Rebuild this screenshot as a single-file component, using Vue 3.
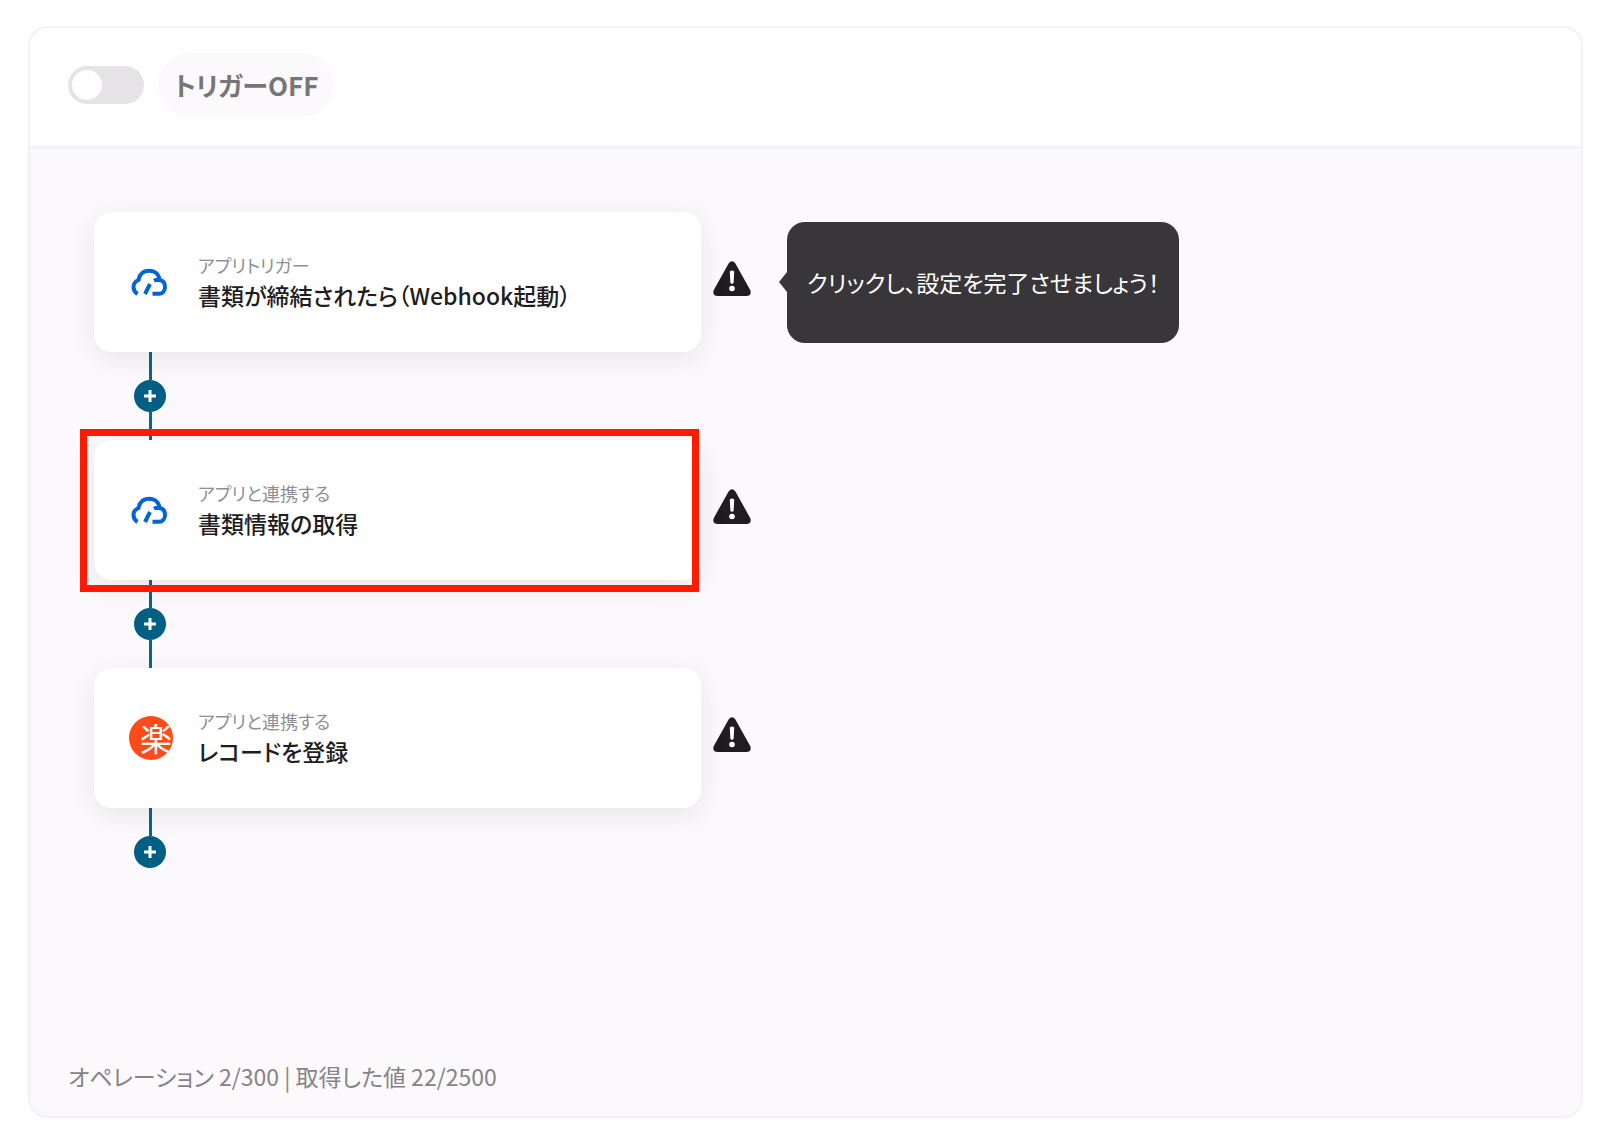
<template>
  <main class="page">
    <section class="panel">
      <header class="panel-header">
        <input id="trigger" v-model="triggerOn" class="switch" type="checkbox" role="switch" />
        <label class="chip" for="trigger">トリガー{{ triggerOn ? 'ON' : 'OFF' }}</label>
      </header>

      <div class="flow">
        <template v-for="(step, index) in steps" :key="index">
          <div class="step">
            <div class="card-wrap">
              <button class="card" type="button" @click="selected = index">
                <svg v-if="step.app === 'cloud'" class="logo" viewBox="0 0 44 44">
                  <path
                    d="M8.500 34C5.500 32 4.500 29.500 4.500 27C4.500 23.500 6.500 21.300 9.500 20C10.500 14 14.500 10.800 20 10.800C26 10.800 30 14.500 30.500 20C34 20.500 36 23 36 27C36 31 33.500 33.800 30 33.800H23.500M31.500 20.500C29.500 19.500 27.500 19.500 25 20.800M21 24L16 34"
                    fill="none"
                    stroke="#0563d6"
                    stroke-width="4"
                  />
                </svg>
                <span v-else class="logo raku">楽</span>
                <span class="card-text">
                  <span class="card-label">{{ step.label }}</span>
                  <span class="card-title">{{ step.title }}</span>
                </span>
              </button>
              <div v-if="selected === index" class="highlight"></div>
            </div>
            <svg class="warning" viewBox="0 0 38 42" role="img" aria-label="未設定">
              <path
                d="M15.600 2.500Q19 -2 22.400 2.500L37.200 29Q39 34.500 34 35H4Q-1 34.500 0.800 29Z"
                fill="#1f1d21"
              />
              <path d="M16.800 10.500Q19 8.500 21.200 10.500L20.600 22Q19 23.500 17.400 22Z" fill="#fff" />
              <circle cx="19" cy="27.500" r="2.800" fill="#fff" />
            </svg>
            <p v-if="step.hint" class="bubble">{{ step.hint }}</p>
          </div>
          <div class="connector">
            <span class="line"></span>
            <button class="add" type="button" aria-label="追加">
              <svg viewBox="0 0 14 14">
                <path d="M7 1V13M1 7H13" stroke="#fff" stroke-width="3" />
              </svg>
            </button>
            <span v-if="index < steps.length - 1" class="line"></span>
          </div>
        </template>
      </div>

      <footer class="panel-footer">オペレーション 2/300 | 取得した値 22/2500</footer>
    </section>
  </main>
</template>

<script setup>
import { ref } from 'vue'

const triggerOn = ref(false)
const selected = ref(1)

const steps = [
  {
    app: 'cloud',
    label: 'アプリトリガー',
    title: '書類が締結されたら（Webhook起動）',
    hint: 'クリックし、設定を完了させましょう！'
  },
  { app: 'cloud', label: 'アプリと連携する', title: '書類情報の取得' },
  { app: 'raku', label: 'アプリと連携する', title: 'レコードを登録' }
]
</script>

<style>
body {
  background: #fefefe;
}
</style>

<style scoped>
.page {
  box-sizing: border-box;
  display: flex;
  min-height: 100vh;
  padding: 26px 17px 10px 28px;
  font-family: "Noto Sans CJK JP", sans-serif;
  font-feature-settings: "palt";
}

.panel {
  flex: 1;
  display: flex;
  flex-direction: column;
  border: 2px solid #f2f1f4;
  border-radius: 20px;
  background: #fbf9fc;
  overflow: hidden;
}

.panel-header {
  display: flex;
  align-items: center;
  gap: 14px;
  padding: 25px 38px 29px;
  border-bottom: 3px solid #f3f2f5;
  background: #fefefe;
}

.switch {
  appearance: none;
  width: 76px;
  height: 38px;
  margin: 0;
  padding: 4px;
  border-radius: 19px;
  background: #e5e3e6;
  cursor: pointer;
}

.switch::before {
  content: "";
  display: block;
  width: 30px;
  height: 30px;
  border-radius: 50%;
  background: #fefefe;
}

.switch:checked {
  background: #005f83;
}

.switch:checked::before {
  margin-left: auto;
}

.chip {
  padding: 0 16px;
  border-radius: 32px;
  background: #fbf9fc;
  color: #777578;
  font-size: 26px;
  font-weight: 700;
  line-height: 64px;
}

.flow {
  flex: 1;
  padding: 63px 64px;
}

.step {
  display: flex;
  align-items: center;
}

.card-wrap {
  position: relative;
  flex: 0 1 607px;
}

.card {
  display: flex;
  align-items: center;
  gap: 25px;
  width: 100%;
  height: 140px;
  padding: 0 35px;
  border: 0;
  border-radius: 18px;
  background: #fff;
  box-shadow: 0 6px 28px rgba(40, 35, 45, 0.09);
  font: inherit;
  font-feature-settings: inherit;
  text-align: left;
  cursor: pointer;
}

.highlight {
  position: absolute;
  inset: -11px 2px -12px -14px;
  z-index: 1;
  border: 7px solid #ff1a00;
  pointer-events: none;
}

.logo {
  box-sizing: border-box;
  flex: none;
  width: 44px;
  height: 44px;
}

.raku {
  padding-left: 11px;
  border-radius: 50%;
  background: #ff4b19;
  color: #fff;
  font-size: 32px;
  font-weight: 400;
  line-height: 42px;
}

.card-text {
  display: flex;
  flex-direction: column;
  padding-bottom: 2px;
}

.card-label {
  color: #918f92;
  font-size: 18px;
  line-height: 28px;
}

.card-title {
  color: #1f1d21;
  font-size: 23px;
  font-weight: 500;
  line-height: 32px;
}

.warning {
  flex: none;
  width: 38px;
  height: 42px;
  margin-left: 12px;
}

.bubble {
  position: relative;
  margin: 0 0 0 36px;
  padding: 0 20px;
  border-radius: 18px;
  background: #39363a;
  color: #fff;
  font-size: 23px;
  line-height: 121px;
}

.bubble::before {
  content: "";
  position: absolute;
  top: 50%;
  left: -8px;
  border: solid transparent;
  border-width: 10px 8px 10px 0;
  border-right-color: #39363a;
  transform: translateY(-50%);
}

.connector {
  display: flex;
  flex-direction: column;
  align-items: flex-start;
  margin-left: 40px;
}

.line {
  width: 3px;
  height: 28px;
  margin-left: 15px;
  background: #086788;
}

.add {
  display: flex;
  align-items: center;
  justify-content: center;
  width: 32px;
  height: 32px;
  padding: 0;
  border: 0;
  border-radius: 50%;
  background: #005f83;
  cursor: pointer;
}

.add svg {
  width: 14px;
  height: 14px;
}

.panel-footer {
  padding: 0 38px 22px;
  color: #868487;
  font-size: 23px;
  line-height: 36px;
}
</style>
